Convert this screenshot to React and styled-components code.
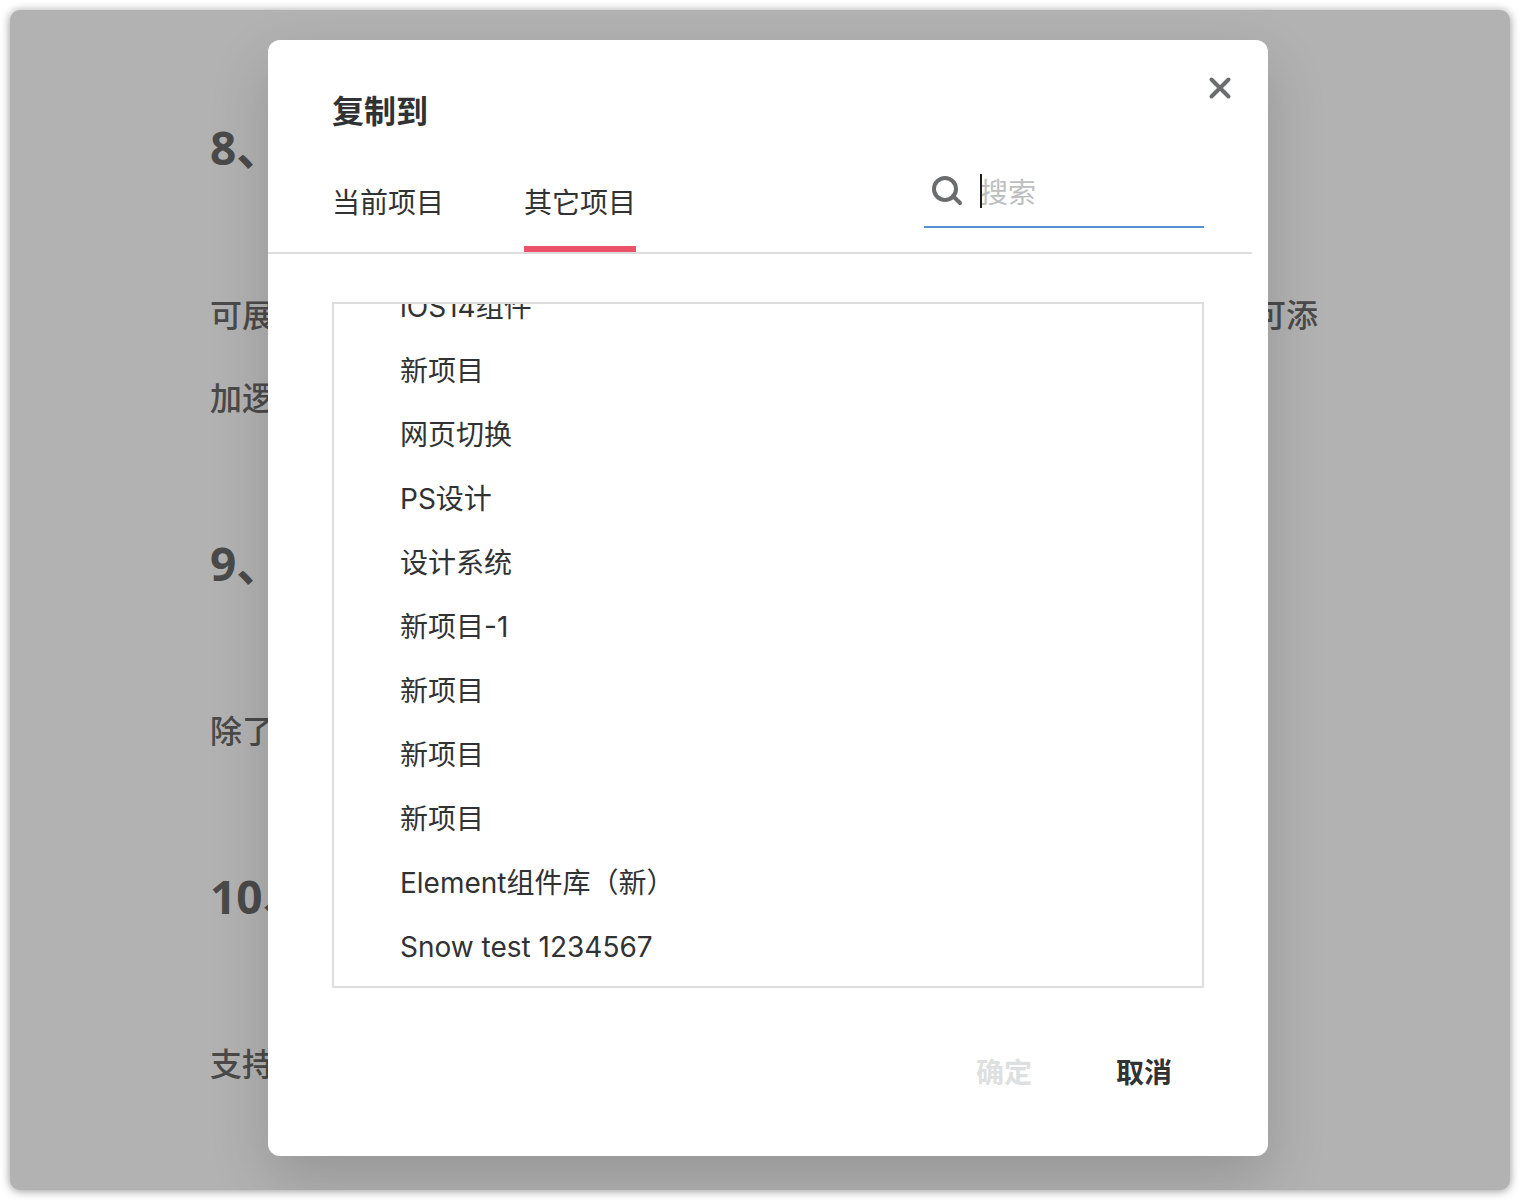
import React, { useLayoutEffect, useRef } from "react";
import styled, { createGlobalStyle } from "styled-components";

const GlobalStyle = createGlobalStyle`
  *, *::before, *::after { box-sizing: border-box; }
  body {
    margin: 0;
    background: #fff;
    color: #303233;
    font-family: Inter, "Noto Sans CJK SC", sans-serif;
    font-size: 28px;
  }
  h1, h2, p, ul { margin: 0; padding: 0; }
  button, input { font: inherit; color: inherit; }
`;

const Page = styled.div`
  display: flex;
  min-height: 100vh;
  padding: 10px;
`;

const Window = styled.main`
  position: relative;
  flex: 1;
  border-radius: 10px;
  background: #b2b2b2;
  box-shadow: 0 1px 10px rgba(0, 0, 0, 0.42);
`;

const Article = styled.article`
  padding: 96px 192px 0 200px;
  color: #4a4a4a;
  font-family: "Noto Sans", "Noto Sans CJK SC", sans-serif;
`;

const Heading = styled.h2`
  margin-bottom: 84px;
  font-size: 46px;
  line-height: 83px;
  font-weight: 700;
`;

const Paragraph = styled.p`
  margin-bottom: 83px;
  font-size: 32px;
  line-height: 83px;
  font-weight: 500;
`;

const Line = styled.span`
  display: flex;
  justify-content: space-between;
`;

const Overlay = styled.div`
  position: absolute;
  inset: 0;
  display: flex;
  justify-content: center;
  align-items: flex-start;
  padding: 30px 0 0 16px;
  border-radius: 10px;
  overflow: hidden;
`;

const Dialog = styled.section`
  position: relative;
  width: 1000px;
  max-width: 100%;
  border-radius: 12px;
  background: #fff;
  box-shadow: 0 24px 60px rgba(0, 0, 0, 0.16);
`;

const Title = styled.h1`
  padding: 48px 64px 0;
  font-size: 32px;
  line-height: 48px;
  font-weight: 700;
`;

const CloseButton = styled.button`
  position: absolute;
  top: 24px;
  right: 24px;
  display: grid;
  place-items: center;
  width: 48px;
  height: 48px;
  padding: 0;
  border: 0;
  background: none;
  color: #6b6c6e;
`;

const Toolbar = styled.div`
  display: flex;
  justify-content: space-between;
  align-items: flex-end;
  margin-right: 16px;
  padding: 38px 48px 0 64px;
  border-bottom: 2px solid #dcdddd;
`;

const Tabs = styled.div`
  display: flex;
  gap: 80px;
`;

const Tab = styled.button`
  padding: 0 0 23px;
  border: 0;
  border-bottom: 6px solid ${(p) => (p.$active ? "#eb5168" : "transparent")};
  background: none;
  line-height: 40px;
`;

const Search = styled.label`
  display: flex;
  align-items: center;
  gap: 16px;
  width: 280px;
  margin-bottom: 24px;
  padding: 0 0 18px 8px;
  border-bottom: 2px solid #5590d4;
  color: #6b6c6e;
`;

const SearchField = styled.span`
  position: relative;
  display: flex;
  flex: 1;
  min-width: 0;
`;

const SearchInput = styled.input`
  width: 100%;
  height: 34px;
  padding: 4px 0 0;
  border: 0;
  outline: 0;
  background: none;
  color: #303233;
  &::placeholder {
    color: #bdbec0;
    opacity: 1;
  }
`;

const Caret = styled.span`
  position: absolute;
  inset: 0 auto 0 0;
  width: 2px;
  background: #1c1d1e;
`;

const ProjectList = styled.ul`
  height: 686px;
  margin: 48px 64px 0;
  padding: 0 66px 7px;
  border: 2px solid #dcdddd;
  overflow-y: auto;
  scrollbar-width: none;
  list-style: none;
`;

const Project = styled.li`
  line-height: 64px;
`;

const Footer = styled.footer`
  display: flex;
  justify-content: flex-end;
  gap: 20px;
  padding: 51px 64px 53px;
`;

const Action = styled.button`
  width: 120px;
  height: 64px;
  padding: 0;
  border: 0;
  background: none;
  color: ${(p) => (p.disabled ? "#dddfe0" : "#303233")};
  font-weight: 600;
`;

const projects = [
  "iOS14组件",
  "新项目",
  "网页切换",
  "PS设计",
  "设计系统",
  "新项目-1",
  "新项目",
  "新项目",
  "新项目",
  "Element组件库（新）",
  "Snow test 1234567",
];

function SearchIcon() {
  return (
    <svg width="32" height="34" viewBox="0 0 32 34" fill="none" stroke="currentColor" strokeWidth="4" strokeLinecap="round" aria-hidden="true">
      <circle cx="13" cy="15" r="11" />
      <path d="M21 22L28 29" />
    </svg>
  );
}

function CloseIcon() {
  return (
    <svg width="24" height="24" viewBox="0 0 24 24" fill="none" stroke="currentColor" strokeWidth="4" strokeLinecap="round" aria-hidden="true">
      <path d="M3.5 3.5L20.5 20.5M20.5 3.5L3.5 20.5" />
    </svg>
  );
}

export default function App() {
  const listRef = useRef(null);

  useLayoutEffect(() => {
    listRef.current.scrollTop = listRef.current.scrollHeight;
  }, []);

  return (
    <>
      <GlobalStyle />
      <Page>
        <Window>
          <Article>
            <Heading>8、</Heading>
            <Paragraph>
              <Line>
                <span>可展</span>
                <span>可添</span>
              </Line>
              <Line>加逻</Line>
            </Paragraph>
            <Heading>9、</Heading>
            <Paragraph>除了</Paragraph>
            <Heading>10、</Heading>
            <Paragraph>支持</Paragraph>
          </Article>
          <Overlay>
            <Dialog role="dialog" aria-labelledby="dialog-title">
              <Title id="dialog-title">复制到</Title>
              <CloseButton type="button" aria-label="关闭">
                <CloseIcon />
              </CloseButton>
              <Toolbar>
                <Tabs role="tablist">
                  <Tab type="button" role="tab" aria-selected="false">当前项目</Tab>
                  <Tab type="button" role="tab" aria-selected="true" $active>其它项目</Tab>
                </Tabs>
                <Search>
                  <SearchIcon />
                  <SearchField>
                    <SearchInput type="text" placeholder="搜索" aria-label="搜索" />
                    <Caret />
                  </SearchField>
                </Search>
              </Toolbar>
              <ProjectList ref={listRef}>
                {projects.map((name, i) => (
                  <Project key={i}>{name}</Project>
                ))}
              </ProjectList>
              <Footer>
                <Action type="button" disabled>确定</Action>
                <Action type="button">取消</Action>
              </Footer>
            </Dialog>
          </Overlay>
        </Window>
      </Page>
    </>
  );
}
